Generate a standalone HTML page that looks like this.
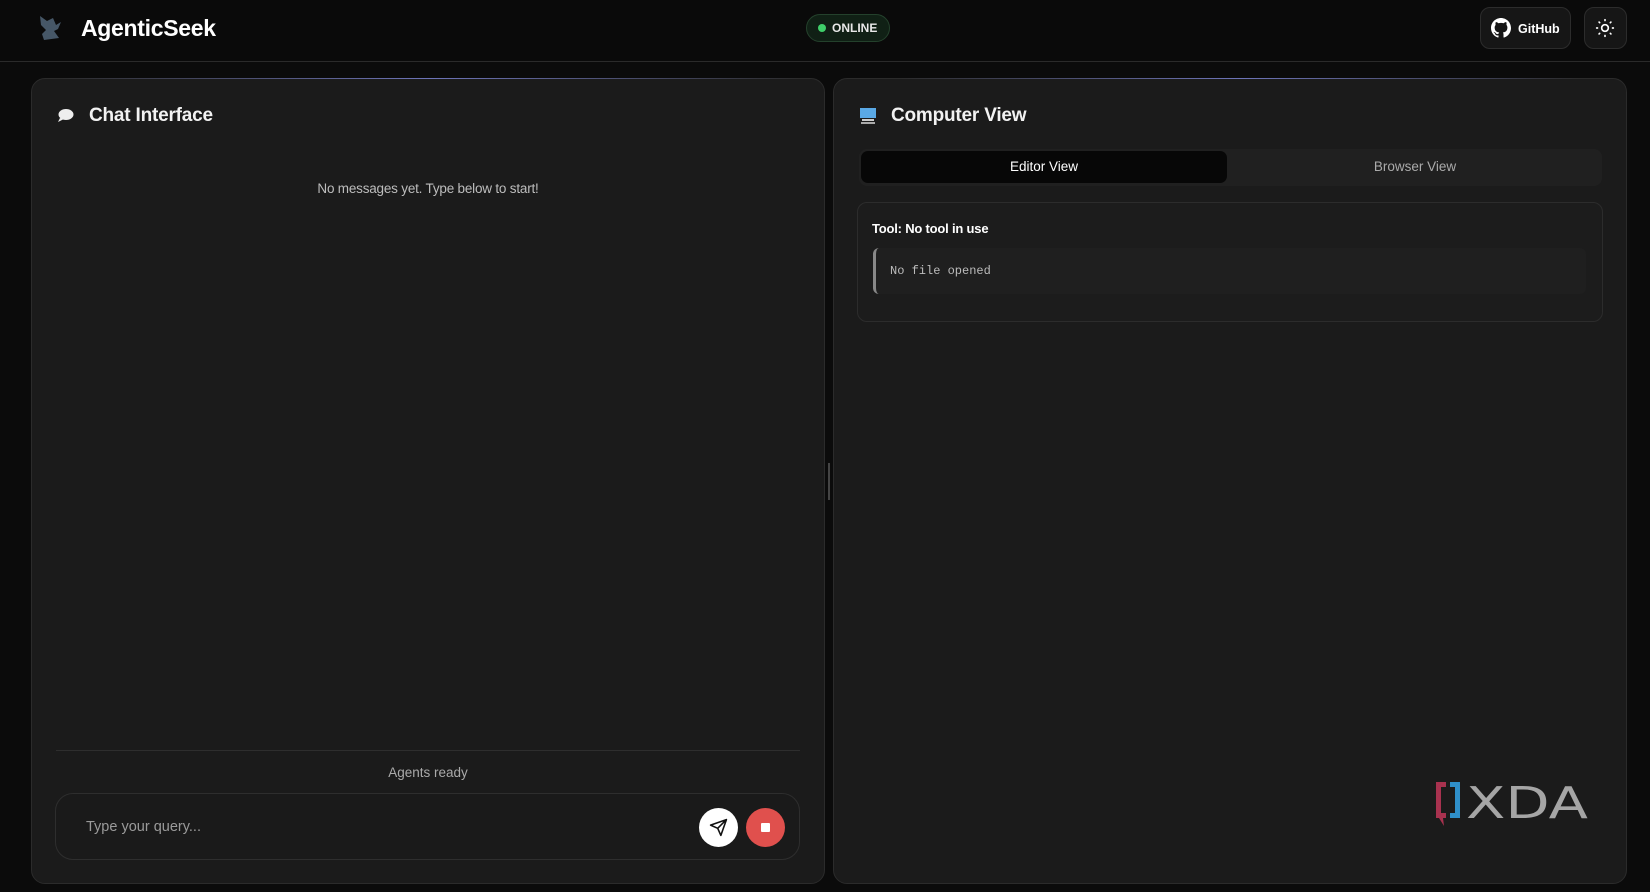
<!DOCTYPE html>
<html><head><meta charset="utf-8"><style>
*{margin:0;padding:0;box-sizing:border-box}
body{width:1650px;height:892px;background:#0b0b0b;font-family:"Liberation Sans",sans-serif;color:#fff;position:relative;overflow:hidden}
.abs{position:absolute}
.hdr{left:0;top:0;width:1650px;height:62px;background:#0a0a0a;border-bottom:1px solid #2a2a2a}
.panel{background:#1b1b1b;border:1px solid #2b2b2b;border-radius:14px;top:78px;height:806px}
.btn{background:#161616;border:1px solid #2c2c2c;border-radius:10px}
</style></head><body>
<div class="abs hdr"></div>
<svg class="abs" style="left:34px;top:13px" width="30" height="30" viewBox="0 0 30 30"><path d="M6 3 L13 8 L19 5 L22 12 L27 9 L24 16 L20 18 L25 25 L10 27 L8 21 L12 17 L7 12Z" fill="#4d5f71" opacity=".9"/></svg>
<div class="abs" style="left:81px;top:15px;font-size:23px;font-weight:bold;letter-spacing:-0.3px">AgenticSeek</div>
<div class="abs" style="left:806px;top:14px;width:84px;height:28px;border-radius:14px;background:#102015;border:1px solid #24412c"></div>
<div class="abs" style="left:818px;top:24px;width:8px;height:8px;border-radius:50%;background:#3fcf6a"></div>
<div class="abs" style="left:832px;top:21px;font-size:12px;font-weight:bold;color:#e8e8e8">ONLINE</div>
<div class="abs btn" style="left:1480px;top:7px;width:91px;height:42px"></div>
<svg class="abs" style="left:1491px;top:18px" width="20" height="20" viewBox="0 0 16 16"><path fill="#fff" d="M8 0C3.58 0 0 3.58 0 8c0 3.54 2.29 6.53 5.47 7.59.4.07.55-.17.55-.38v-1.33c-2.23.48-2.7-1.07-2.7-1.07-.36-.92-.89-1.17-.89-1.17-.73-.5.06-.49.06-.49.8.06 1.23.83 1.23.83.71 1.22 1.87.87 2.33.66.07-.52.28-.87.51-1.07-1.78-.2-3.64-.89-3.64-3.95 0-.87.31-1.59.82-2.15-.08-.2-.36-1.02.08-2.12 0 0 .67-.21 2.2.82a7.6 7.6 0 014 0c1.53-1.04 2.2-.82 2.2-.82.44 1.1.16 1.92.08 2.12.51.56.82 1.27.82 2.15 0 3.07-1.87 3.75-3.65 3.95.29.25.54.73.54 1.48v2.2c0 .21.15.46.55.38A8 8 0 0016 8c0-4.42-3.58-8-8-8z"/></svg>
<div class="abs" style="left:1518px;top:22px;font-size:12.5px;font-weight:bold">GitHub</div>
<div class="abs btn" style="left:1584px;top:7px;width:43px;height:42px"></div>
<svg class="abs" style="left:1595px;top:18px" width="20" height="20" viewBox="0 0 24 24" fill="none" stroke="#fff" stroke-width="2" stroke-linecap="round"><circle cx="12" cy="12" r="4"/><path d="M12 2v1M12 21v1M2 12h1M21 12h1M4.9 4.9l.7.7M18.4 18.4l.7.7M4.9 19.1l.7-.7M18.4 5.6l.7-.7"/></svg>

<div class="abs panel" style="left:31px;width:794px"></div>
<div class="abs" style="left:60px;top:78px;width:740px;height:1px;background:linear-gradient(90deg,transparent,#6d74b8,transparent)"></div>
<svg class="abs" style="left:57px;top:108px" width="17" height="15" viewBox="0 0 17 15"><ellipse cx="9" cy="6.5" rx="7.5" ry="5.5" fill="#eee"/><path d="M3 10 L1 14 L7 11Z" fill="#eee"/></svg>
<div class="abs" style="left:89px;top:105px;font-size:19px;font-weight:bold;color:#f2f2f2;letter-spacing:-0.2px">Chat Interface</div>
<div class="abs" style="left:31px;width:794px;top:181px;text-align:center;font-size:13.5px;color:#bdbdbd;letter-spacing:-0.2px">No messages yet. Type below to start!</div>
<div class="abs" style="left:56px;top:750px;width:744px;height:1px;background:#2e2e2e"></div>
<div class="abs" style="left:31px;width:794px;top:765px;text-align:center;font-size:13.5px;color:#aaa">Agents ready</div>
<div class="abs" style="left:55px;top:793px;width:745px;height:67px;border-radius:18px;background:#1a1a1a;border:1px solid #2e2e2e"></div>
<div class="abs" style="left:86px;top:819px;font-size:14.5px;color:#9a9a9a">Type your query...</div>
<div class="abs" style="left:699px;top:808px;width:39px;height:39px;border-radius:50%;background:#fff"></div>
<svg class="abs" style="left:709px;top:818px" width="19" height="19" viewBox="0 0 24 24" fill="none" stroke="#111" stroke-width="2" stroke-linejoin="round"><path d="M22 2L11 13M22 2l-7 20-4-9-9-4z"/></svg>
<div class="abs" style="left:746px;top:808px;width:39px;height:39px;border-radius:50%;background:#e0504d"></div>
<div class="abs" style="left:761px;top:823px;width:9px;height:9px;background:#fff;border-radius:1px"></div>
<div class="abs" style="left:828px;top:463px;width:2px;height:37px;background:#444"></div>

<div class="abs panel" style="left:833px;width:794px"></div>
<div class="abs" style="left:900px;top:78px;width:680px;height:1px;background:linear-gradient(90deg,transparent,#6d74b8,transparent)"></div>
<svg class="abs" style="left:859px;top:107px" width="18" height="18" viewBox="0 0 18 18"><rect x="1" y="1" width="16" height="10" fill="#5aa9e6"/><rect x="3" y="12" width="12" height="2" fill="#ccc"/><rect x="2" y="15" width="14" height="2" fill="#aaa"/></svg>
<div class="abs" style="left:891px;top:105px;font-size:19px;font-weight:bold;color:#f2f2f2;letter-spacing:-0.2px">Computer View</div>
<div class="abs" style="left:859px;top:149px;width:743px;height:37px;border-radius:8px;background:#202020"></div>
<div class="abs" style="left:861px;top:151px;width:366px;height:32px;border-radius:7px;background:#070707"></div>
<div class="abs" style="left:861px;width:366px;top:159px;text-align:center;font-size:13.5px;color:#fff">Editor View</div>
<div class="abs" style="left:1229px;width:372px;top:159px;text-align:center;font-size:13.5px;color:#aaa">Browser View</div>
<div class="abs" style="left:857px;top:202px;width:746px;height:120px;border-radius:10px;background:#1c1c1c;border:1px solid #2c2c2c"></div>
<div class="abs" style="left:872px;top:221px;font-size:13px;font-weight:bold;color:#fff;letter-spacing:-0.2px">Tool: No tool in use</div>
<div class="abs" style="left:873px;top:248px;width:713px;height:46px;border-radius:6px;background:#1f1f1f;border-left:3px solid #888"></div>
<div class="abs" style="left:890px;top:264px;font-family:'Liberation Mono',monospace;font-size:12px;color:#bbb">No file opened</div>

<svg class="abs" style="left:1434px;top:780px" width="156" height="48" viewBox="0 0 156 48"><path d="M2 2h10v5H7v26h5v5h-3l1 8-5-8H2z" fill="#a8324f"/><path d="M16 2h10v36H16v-5h5V7h-5z" fill="#2f8fc9"/><text x="32" y="38" font-family="DejaVu Sans,sans-serif" font-size="44" fill="#a5a5a5" textLength="122" lengthAdjust="spacingAndGlyphs">XDA</text></svg>
</body></html>
